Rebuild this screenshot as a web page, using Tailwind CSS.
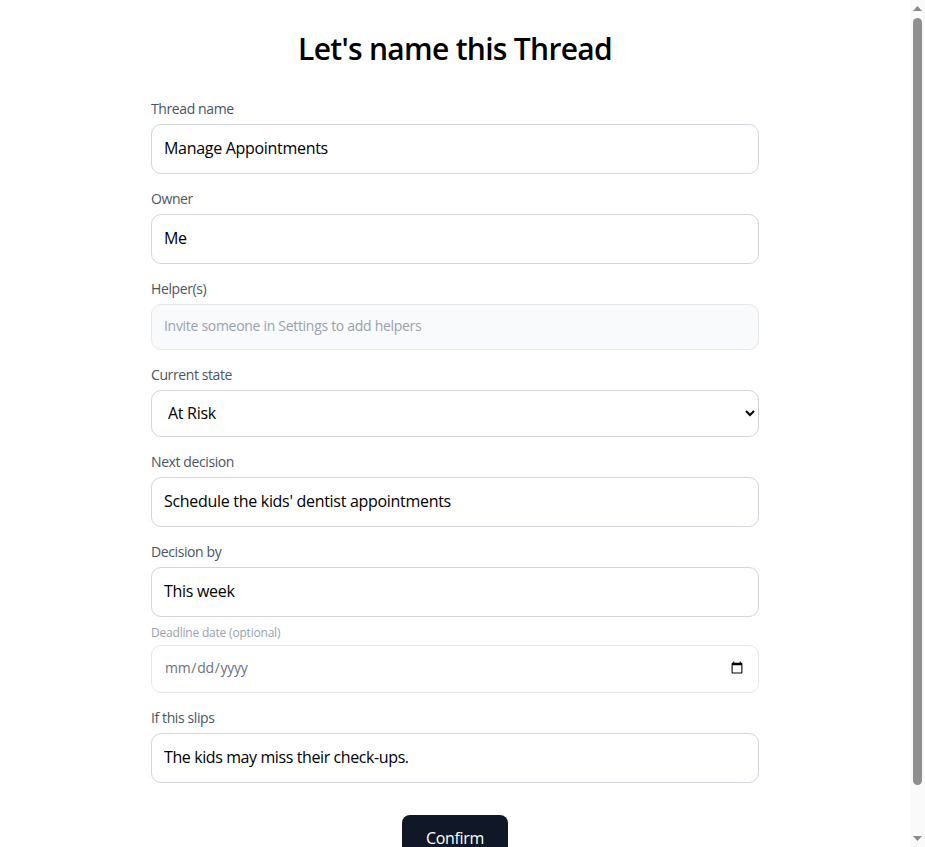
<!DOCTYPE html>
<html lang="en">

<head>
  <meta charset="UTF-8" />
  <meta name="viewport" content="width=device-width, initial-scale=1" />
  <title>Let's name this Thread</title>
  <script src="https://cdn.jsdelivr.net/npm/@tailwindcss/browser@4"></script>
</head>

<body class="bg-white text-black flex h-screen overflow-hidden tracking-[-0.3px] font-['Open_Sans',sans-serif]">

  <main class="flex-1 min-w-0 overflow-hidden">
    <div class="max-w-2xl mx-auto px-8 pt-8">
      <h1 class="text-3xl font-semibold text-center h-9 leading-[34px] tracking-[-0.7px] mb-8">Let's name this Thread</h1>

      <form class="flex flex-col gap-4">
        <div>
          <label class="block text-sm leading-[18px] tracking-[-0.4px] text-gray-600 mb-[6px]">Thread name</label>
          <input type="text" value="Manage Appointments" class="w-full h-[50px] px-3 pb-0.5 border border-gray-300 rounded-[10px] text-black" />
        </div>

        <div>
          <label class="block text-sm leading-[18px] tracking-[-0.4px] text-gray-600 mb-[6px]">Owner</label>
          <input type="text" value="Me" class="w-full h-[50px] px-3 pb-0.5 border border-gray-300 rounded-[10px] text-black" />
        </div>

        <div>
          <label class="block text-sm leading-[18px] tracking-[-0.4px] text-gray-600 mb-[6px]">Helper(s)</label>
          <input type="text" disabled placeholder="Invite someone in Settings to add helpers" class="w-full h-[46px] px-3 pb-1 border border-gray-200 bg-gray-50 rounded-[10px] text-sm placeholder:text-gray-400" />
        </div>

        <div>
          <label class="block text-sm leading-[18px] tracking-[-0.4px] text-gray-600 mb-[6px]">Current state</label>
          <select class="w-full h-[47px] pl-3 pr-[11px] pb-0.5 border border-gray-300 rounded-[10px] bg-white text-black appearance-auto">
            <option>At Risk</option>
            <option>On Track</option>
            <option>Blocked</option>
          </select>
        </div>

        <div>
          <label class="block text-sm leading-[18px] tracking-[-0.4px] text-gray-600 mb-[6px]">Next decision</label>
          <input type="text" value="Schedule the kids' dentist appointments" class="w-full h-[50px] px-3 pb-0.5 border border-gray-300 rounded-[10px] text-black" />
        </div>

        <div>
          <label class="block text-sm leading-[18px] tracking-[-0.4px] text-gray-600 mb-[6px]">Decision by</label>
          <input type="text" value="This week" class="w-full h-[50px] px-3 pb-0.5 border border-gray-300 rounded-[10px] text-black" />
          <label class="block text-xs leading-4 tracking-[-0.2px] text-gray-400 mt-2 mb-1">Deadline date (optional)</label>
          <input type="date" class="w-full h-12 px-3 pb-0.5 border border-gray-200 rounded-[10px] text-sm text-gray-500" />
        </div>

        <div>
          <label class="block text-sm leading-[18px] tracking-[-0.4px] text-gray-600 mb-[6px]">If this slips</label>
          <input type="text" value="The kids may miss their check-ups." class="w-full h-[50px] px-3 pb-0.5 border border-gray-300 rounded-[10px] tracking-[-0.4px] text-black" />
        </div>

        <div class="flex justify-center mt-4">
          <button type="button" class="w-[106px] h-12 pb-0.5 shrink-0 bg-gray-900 text-white rounded-lg">Confirm</button>
        </div>
      </form>
    </div>
  </main>

  <!-- scrollbar -->
  <aside class="w-[15px] shrink-0 bg-[#fafafa] flex flex-col items-center">
    <svg class="w-[15px] h-[18px] shrink-0" viewBox="0 0 15 18"><path d="M7.5 6 L12 11 H3 Z" fill="#8a8a8a" /></svg>
    <div class="w-[9px] h-[767px] shrink-0 bg-[#8f8f8f] rounded-t-[5px] rounded-b-[5px]"></div>
    <div class="flex-1"></div>
    <svg class="w-[15px] h-[18px] shrink-0" viewBox="0 0 15 18"><path d="M3 7 H12 L7.5 12 Z" fill="#8a8a8a" /></svg>
  </aside>

</body>

</html>
